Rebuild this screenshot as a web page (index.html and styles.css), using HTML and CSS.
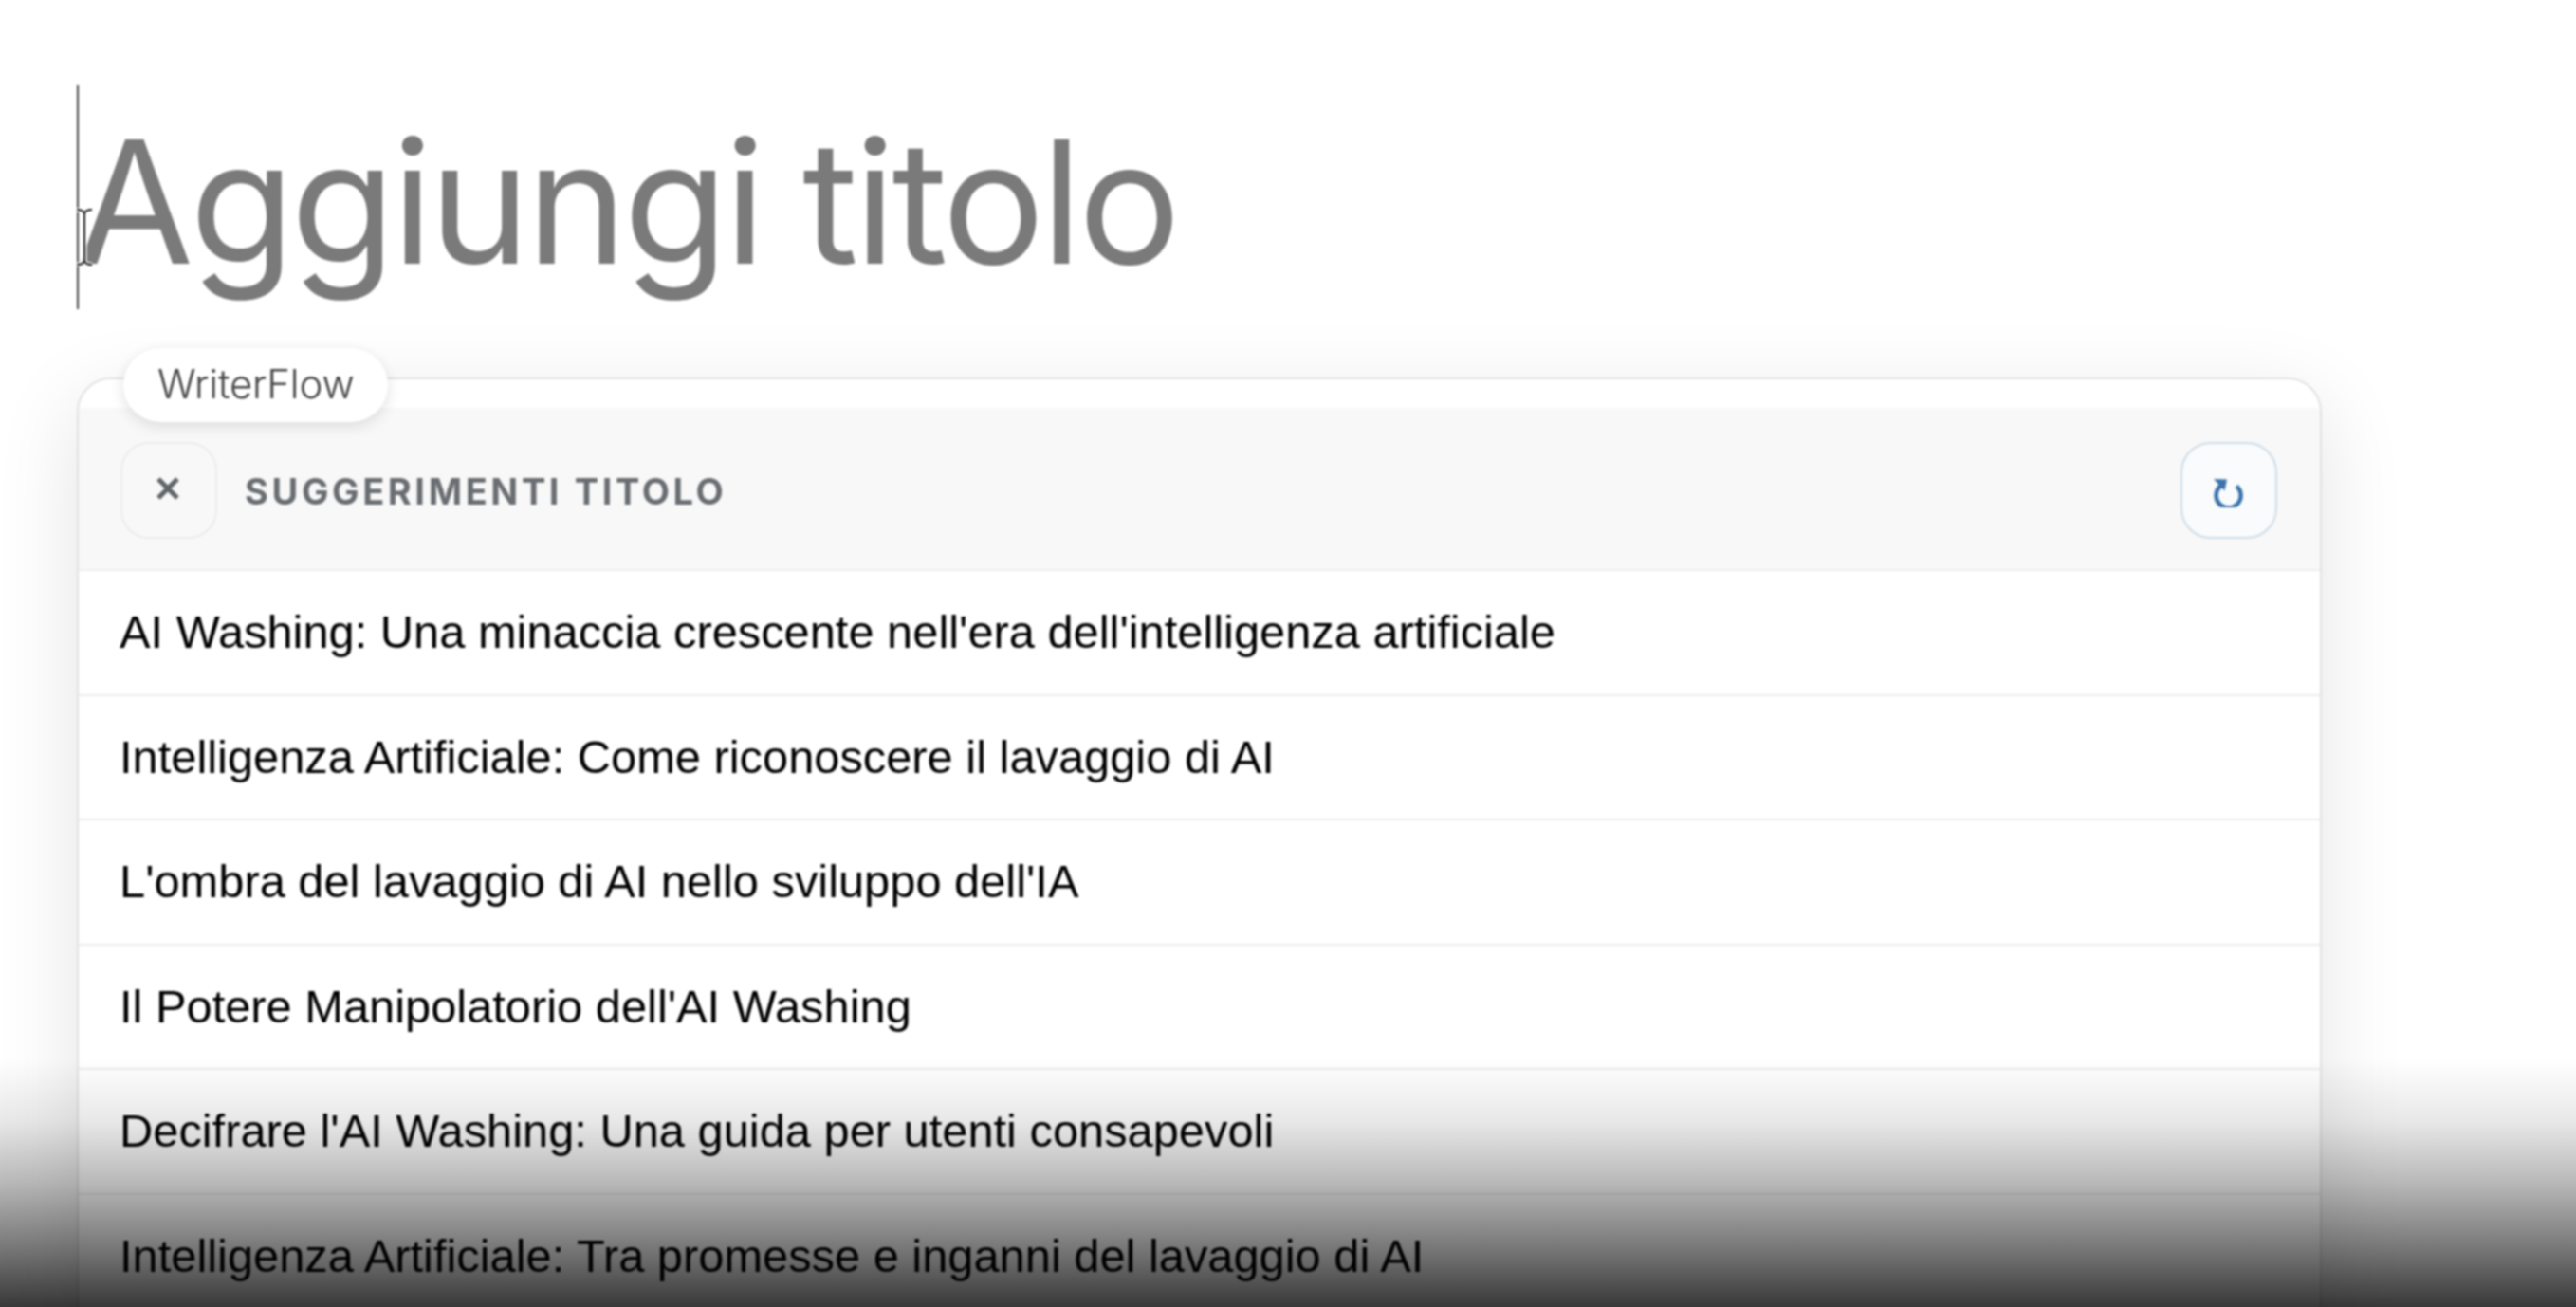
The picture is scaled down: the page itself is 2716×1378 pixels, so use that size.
FILE: index.html
```html
<!DOCTYPE html>
<html lang="it">
<head>
    <meta charset="UTF-8">
    <title>Aggiungi titolo</title>
    <link rel="stylesheet" href="styles.css">
</head>
<body>
    <div class="page">
        <h1 class="title">Aggiungi titolo</h1>
        <svg class="ibeam" width="22" height="62" viewBox="0 0 22 62">
            <path d="M3 2c4 0 7 1 8 4 1-3 4-4 8-4M11 6v50M3 60c4 0 7-1 8-4 1 3 4 4 8 4" fill="none" stroke="#fff" stroke-width="5"/>
            <path d="M3 2c4 0 7 1 8 4 1-3 4-4 8-4M11 6v50M3 60c4 0 7-1 8-4 1 3 4 4 8 4" fill="none" stroke="#111" stroke-width="2"/>
        </svg>

        <section class="panel">
            <span class="badge">WriterFlow</span>
            <header class="panel-head">
                <button class="btn btn-close">
                    <svg class="icon-close" width="26" height="26" viewBox="0 0 26 26"><path d="M3 3l20 20M23 3L3 23" fill="none" stroke="#5f6468" stroke-width="5"/></svg>
                </button>
                <span class="panel-label">SUGGERIMENTI TITOLO</span>
                <button class="btn btn-refresh">
                    <svg class="icon-refresh" width="32" height="31" viewBox="0 0 32 31">
                        <path d="M24 8.500a13 13 0 1 1-15.500-1" fill="none" stroke="#3b73ad" stroke-width="4.500"/>
                        <path d="M0 1l14 .5-2.500 12z" fill="#3b73ad"/>
                    </svg>
                </button>
            </header>
            <ul class="suggestions">
                <li>AI Washing: Una minaccia crescente nell'era dell'intelligenza artificiale</li>
                <li>Intelligenza Artificiale: Come riconoscere il lavaggio di AI</li>
                <li>L'ombra del lavaggio di AI nello sviluppo dell'IA</li>
                <li>Il Potere Manipolatorio dell'AI Washing</li>
                <li>Decifrare l'AI Washing: Una guida per utenti consapevoli</li>
                <li>Intelligenza Artificiale: Tra promesse e inganni del lavaggio di AI</li>
            </ul>
        </section>
    </div>
    <div class="fade"></div>
</body>
</html>
```

FILE: styles.css
```css
html, body {
    margin: 0;
    height: 100%;
    overflow: hidden;
    background: #fff;
}
.page {
    position: relative;
    padding: 90px 0 0 81px;
    filter: blur(0.8px);
}
.title {
    margin: 0;
    height: 236px;
    border-left: 2px solid #444;
    font: 400 180px/246px Inter, sans-serif;
    letter-spacing: -4px;
    word-spacing: -4px;
    text-indent: -3px;
    color: #7a7a7a;
    white-space: nowrap;
}
.ibeam {
    position: absolute;
    left: 78px;
    top: 219px;
}

/* Suggestions panel */
.panel {
    position: relative;
    width: 2367px;
    margin-top: 72px;
    padding-top: 30px;
    box-sizing: border-box;
    background: #fff;
    border: 2px solid #e2e2e2;
    border-radius: 36px 36px 0 0;
    box-shadow: 0 24px 90px rgba(0,0,0,0.11);
}
.badge {
    position: absolute;
    left: 47px;
    top: -33px;
    padding: 0 36px;
    height: 78px;
    background: #fff;
    border-radius: 39px;
    box-shadow: 0 4px 16px rgba(0,0,0,0.12);
    font: 300 42px/76px Inter, sans-serif;
    letter-spacing: -0.2px;
    color: #444;
}
.panel-head {
    display: flex;
    align-items: center;
    gap: 29px;
    height: 172px;
    padding: 4px 45px 0 44px;
    box-sizing: border-box;
    background: #f8f8f8;
    border-bottom: 2px solid #eeeeee;
}
.btn {
    display: flex;
    align-items: center;
    justify-content: center;
    padding: 0;
    box-sizing: border-box;
    background: transparent;
}
.btn-close {
    width: 102px;
    height: 102px;
    border: 2px solid #ececec;
    border-radius: 30px;
}
.icon-close {
    margin-bottom: 4px;
    margin-right: 2px;
}
.btn-refresh {
    width: 102px;
    height: 102px;
    margin-left: auto;
    border: 2px solid #cfdde8;
    border-radius: 32px;
    background: #f9fbfc;
}
.icon-refresh {
    margin-top: 5px;
}
.panel-label {
    padding-top: 2px;
    font: 700 38px Inter, sans-serif;
    letter-spacing: 3.6px;
    color: #6a6e72;
}
.suggestions {
    margin: 0;
    padding: 0;
    list-style: none;
}
.suggestions li {
    height: 131.6px;
    padding-left: 43px;
    box-sizing: border-box;
    border-bottom: 2px solid #ececec;
    font: 48.8px/129px "Liberation Sans", Arial, sans-serif;
    color: #000;
}

/* dark fade from the video frame at the bottom */
.fade {
    position: absolute;
    left: 0;
    right: 0;
    bottom: 0;
    height: 262px;
    background: linear-gradient(rgba(0,0,0,0), rgba(0,0,0,0.09) 25%, rgba(0,0,0,0.28) 50%, rgba(0,0,0,0.55) 78%, rgba(0,0,0,0.78));
    pointer-events: none;
}
```
